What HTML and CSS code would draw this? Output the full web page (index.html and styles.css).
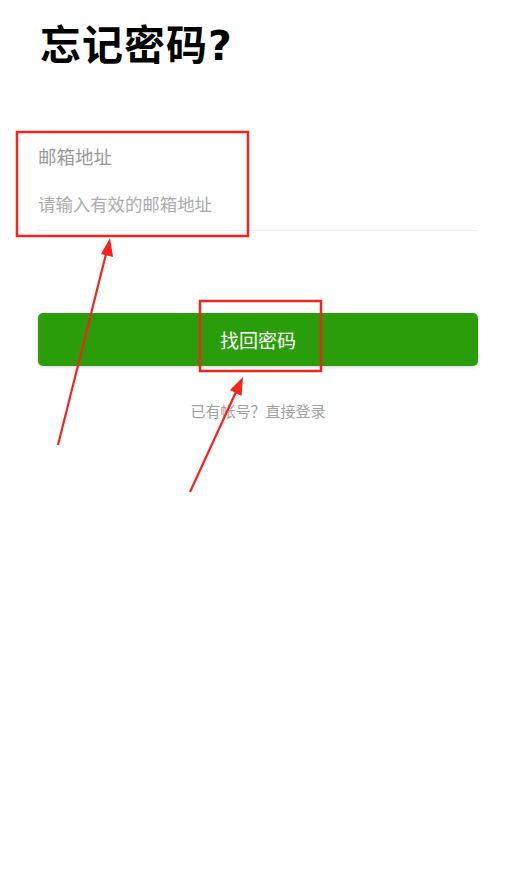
FILE: index.html
```html
<!DOCTYPE html>
<html lang="zh-CN">
<head>
    <meta charset="UTF-8">
    <meta name="viewport" content="width=device-width, initial-scale=1.0">
    <title>忘记密码</title>
    <link rel="stylesheet" href="styles.css">
</head>
<body>
    <div class="page">
        <h1 class="title">忘记密码?</h1>

        <div class="field">
            <label class="field-label" for="email">邮箱地址</label>
            <input class="field-input" id="email" type="email" placeholder="请输入有效的邮箱地址">
        </div>

        <button class="submit">找回密码</button>
        <p class="login-link">已有帐号？直接登录</p>
    </div>

    <!-- annotation marks drawn over the screenshot -->
    <svg class="marks" width="516" height="890" viewBox="0 0 516 890">
        <rect x="17" y="132" width="231" height="104" fill="none" stroke="#f5231b" stroke-width="2.5"/>
        <rect x="200" y="301" width="121" height="70" fill="none" stroke="#f5231b" stroke-width="2.5"/>
        <line x1="58" y1="445" x2="106" y2="254" stroke="#f5231b" stroke-width="2.2"/>
        <polygon points="110,238 113,257 101,254" fill="#f5231b"/>
        <line x1="190" y1="492" x2="236" y2="392" stroke="#f5231b" stroke-width="2.2"/>
        <polygon points="243,377 241.5,396 230,390" fill="#f5231b"/>
    </svg>
</body>
</html>
```

FILE: styles.css
```css
body {
    margin: 0;
    background-color: #fff;
    font-family: "Noto Sans CJK SC", "Noto Sans", sans-serif;
}
.page {
    padding: 22px 38px 0;
}
.title {
    margin: 0 0 0 2px;
    font-family: "DejaVu Sans", "Noto Sans CJK SC", sans-serif;
    font-size: 41px;
    line-height: 48px;
    font-weight: 700;
    letter-spacing: 1px;
    color: #000;
}
.field {
    margin-top: 74px;
    display: flex;
    flex-direction: column;
}
.field-label {
    font-size: 18.5px;
    line-height: 24px;
    color: #999;
}
.field-input {
    margin-top: 10px;
    height: 53px;
    box-sizing: border-box;
    padding: 0 0 1px;
    border: none;
    border-bottom: 1px solid #eeeeee;
    outline: none;
    font-family: inherit;
    font-size: 17.4px;
    color: #333;
    background: transparent;
}
.field-input::placeholder {
    color: #ababab;
}
.submit {
    display: block;
    width: 100%;
    height: 53px;
    margin-top: 82px;
    border: none;
    border-radius: 5px;
    background-color: #2a9d0b;
    box-shadow: 0 1px 3px rgba(0, 0, 0, 0.18);
    color: #fff;
    font-family: inherit;
    font-size: 19px;
    cursor: pointer;
}
.login-link {
    margin: 35px 0 0;
    text-align: center;
    font-size: 15px;
    line-height: 20px;
    color: #a0a0a0;
}
.marks {
    position: absolute;
    top: 0;
    left: 0;
    pointer-events: none;
}
```
